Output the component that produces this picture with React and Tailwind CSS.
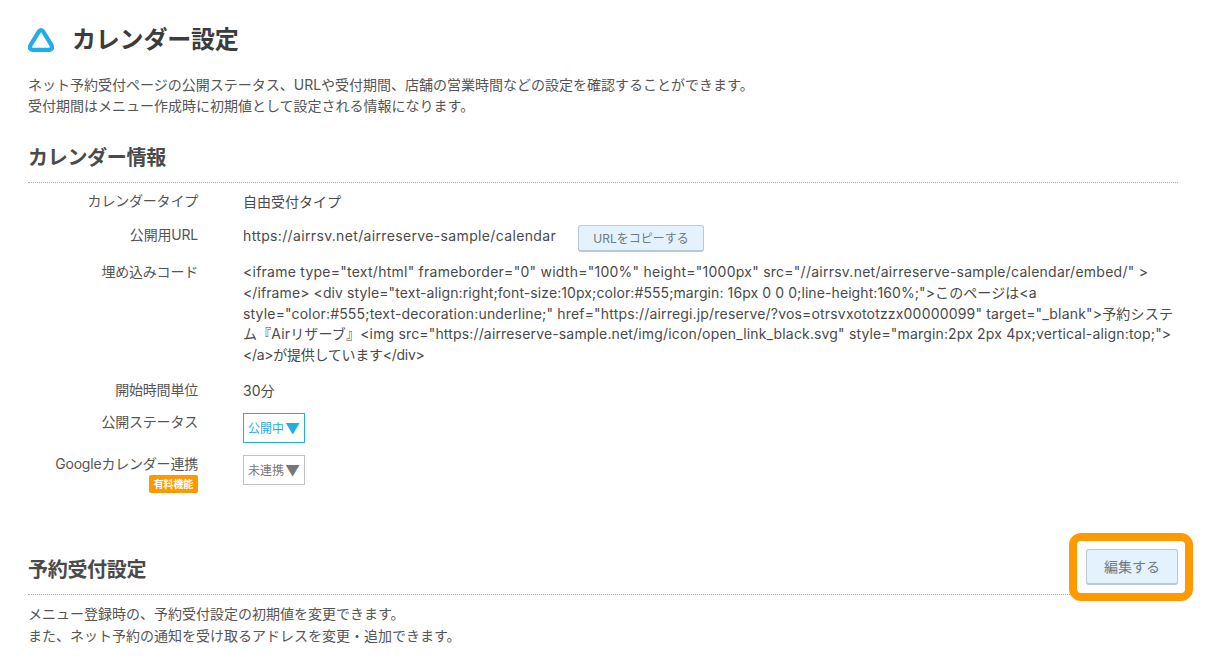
import React from "react";

const rowLabel = "w-[170px] shrink-0 text-right text-[14px] tracking-[-0.2px] leading-[20px] text-[#555]";

const Row = ({ label, badge, className, children }) => (
    <div className={"flex gap-[45px] " + className}>
        <div className={rowLabel}>
            <div>{label}</div>
            {badge && (
                <div className="mt-[1px] flex justify-end">
                    <span className="rounded-[2px] bg-[#ff9900] px-[5px] text-[10px] font-bold leading-[18px] text-white">
                        {badge}
                    </span>
                </div>
            )}
        </div>
        <div className="min-w-0 flex-1 text-[14px] leading-[21px] text-[#4a4a4a]">
            {children}
        </div>
    </div>
);

const Status = ({ label, active }) => (
    <div
        className={
            "mt-[1px] flex h-[30px] w-[62px] items-center justify-center border text-[12px] " +
            (active
                ? "border-[#20aee5] text-[#20aee5]"
                : "border-[#c4c4c4] text-[#777]")
        }
    >
        {label}
        <span className="ml-[1px] text-[15px] leading-none">▼</span>
    </div>
);

const BlueButton = ({ className, children }) => (
    <button
        className={
            "rounded-[3px] border border-[#b8c8d4] border-b-2 bg-[#e3f2fd] text-center text-[#6f7a82] " +
            className
        }
    >
        {children}
    </button>
);

const App = () => {
    return (
        <div
            className="h-[660px] w-[1216px] overflow-hidden bg-white pl-[28px] pr-[38px] pt-[24px] text-[#555]"
            style={{ fontFamily: 'Inter, "Noto Sans CJK JP", sans-serif' }}
        >
            <div className="flex h-[32px] items-center">
                <svg width="26" height="24" viewBox="1 1 24 22.6" className="shrink-0">
                    <path
                        d="M10.8 4.6 Q13 1.4 15.2 4.6 L22.6 16.6 Q25 21.5 20.4 21.5 L5.6 21.5 Q1 21.5 3.4 16.6 Z"
                        fill="none"
                        stroke="#20aee5"
                        strokeWidth="4"
                        strokeLinejoin="round"
                    />
                </svg>
                <h1 className="ml-[18px] text-[24px] font-bold tracking-[-0.2px] text-[#3c3c3c]">
                    カレンダー設定
                </h1>
            </div>

            <p className="mt-[18px] text-[14px] leading-[21px] text-[#555]">
                ネット予約受付ページの公開ステータス、URLや受付期間、店舗の営業時間などの設定を確認することができます。
                <br />
                受付期間はメニュー作成時に初期値として設定される情報になります。
            </p>

            <h2 className="mt-[29px] border-b border-dotted border-[#aaa] pb-[11px] text-[20px] font-bold tracking-[-0.3px] leading-[26px] text-[#4a4a4a]">
                カレンダー情報
            </h2>

            <div className="mt-[8px]">
                <Row label="カレンダータイプ" className="h-[34px] items-start">
                    自由受付タイプ
                </Row>
                <Row label="公開用URL" className="h-[37px]">
                    <div className="flex items-start">
                        <span className="tracking-[0.35px]">https://airrsv.net/airreserve-sample/calendar</span>
                        <BlueButton className="ml-[22px] h-[27px] w-[126px] text-[12px]">
                            URLをコピーする
                        </BlueButton>
                    </div>
                </Row>
                <Row label="埋め込みコード" className="h-[118px]">
                    {/* 行ごとに幅を合わせる */}
                    <div className="whitespace-nowrap leading-[20.8px]">
                        <div className="tracking-[0.25px]">
                            {'<iframe type="text/html" frameborder="0" width="100%" height="1000px" src="//airrsv.net/airreserve-sample/calendar/embed/" >'}
                        </div>
                        <div className="tracking-[0.09px]">
                            {'</iframe> <div style="text-align:right;font-size:10px;color:#555;margin: 16px 0 0 0;line-height:160%;">このページは<a'}
                        </div>
                        <div className="tracking-[0.18px]">
                            {'style="color:#555;text-decoration:underline;" href="https://airregi.jp/reserve/?vos=otrsvxototzzx00000099" target="_blank">予約システ'}
                        </div>
                        <div className="tracking-[0.16px]">
                            {'ム『Airリザーブ』<img src="https://airreserve-sample.net/img/icon/open_link_black.svg" style="margin:2px 2px 4px;vertical-align:top;">'}
                        </div>
                        <div className="tracking-[-0.27px]">
                            {'</a>が提供しています</div>'}
                        </div>
                    </div>
                </Row>
                <Row label="開始時間単位" className="h-[32px]">
                    30分
                </Row>
                <Row label="公開ステータス" className="h-[42px]">
                    <Status label="公開中" active />
                </Row>
                <Row label="Googleカレンダー連携" badge="有料機能" className="h-[40px]">
                    <Status label="未連携" />
                </Row>
            </div>

            <div className="relative mt-[57px] flex h-[44px] items-end justify-between border-b border-dotted border-[#aaa] pb-[11px]">
                <h2 className="text-[20px] font-bold tracking-[-0.3px] leading-[26px] text-[#4a4a4a]">
                    予約受付設定
                </h2>
                <BlueButton className="absolute right-0 top-[-2px] h-[36px] w-[92px] text-[14px]">
                    編集する
                </BlueButton>
                <div className="absolute right-[-15px] top-[-18px] h-[68px] w-[124px] rounded-[12px] border-[8px] border-[#ff9900]" />
            </div>

            <p className="mt-[8px] text-[14px] leading-[22px] text-[#555]">
                メニュー登録時の、予約受付設定の初期値を変更できます。
                <br />
                また、ネット予約の通知を受け取るアドレスを変更・追加できます。
            </p>
        </div>
    );
};

export default App;
